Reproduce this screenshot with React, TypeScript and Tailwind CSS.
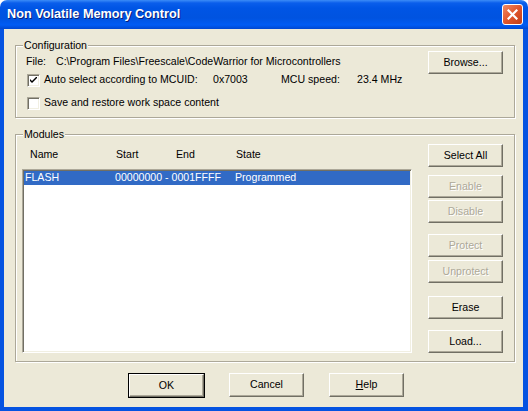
import React from 'react';

const btnBase =
  'h-[23px] w-[75px] flex items-center justify-center bg-[#ECE9D8] border-t border-l border-t-white border-l-white border-b border-r border-b-[#716F64] border-r-[#716F64] shadow-[inset_-1px_-1px_0_#ACA899]';

const Button: React.FC<{ label: React.ReactNode; disabled?: boolean; className?: string }> = ({
  label,
  disabled,
  className = '',
}) => (
  <div
    className={`${btnBase} ${className} ${
      disabled ? 'text-[#ACA899] [text-shadow:1px_1px_0_#fff]' : 'text-black'
    }`}
  >
    {label}
  </div>
);

const Checkbox: React.FC<{ checked?: boolean }> = ({ checked }) => (
  <div className="w-[13px] h-[13px] bg-white border border-t-[#ACA899] border-l-[#ACA899] border-b-white border-r-white shadow-[inset_1px_1px_0_#716F64,inset_-1px_-1px_0_#F1EFE2] flex items-center justify-center">
    {checked && (
      <svg width="7" height="7" viewBox="0 0 7 7">
        <path d="M0 2 L0 4 L2 6 L7 1 L7 -1 L2 4 Z" fill="#000" />
      </svg>
    )}
  </div>
);

const GroupLabel: React.FC<{ text: string }> = ({ text }) => (
  <span className="absolute left-[7px] -top-[8px] px-[1px] leading-[14px] bg-[#ECE9D8]">{text}</span>
);

export default function App() {
  return (
    <div className="w-[528px] h-[411px] flex flex-col font-['Liberation_Sans',Arial,sans-serif] text-[10.6px] text-black select-none">
      {/* title bar */}
      <div className="h-[29px] shrink-0 rounded-t-[7px] flex items-center pl-[7px] pr-[5px] bg-[linear-gradient(to_bottom,#3C8CF7_0px,#0A5EEB_3px,#0055E5_8px,#0053E0_18px,#005CF4_25px,#0047D0_29px)]">
        <span className="flex-1 text-white font-bold text-[12.7px] [text-shadow:1px_1px_0_#0A1E7A]">
          Non Volatile Memory Control
        </span>
        <div className="w-[21px] h-[21px] rounded-[3px] border border-white bg-[linear-gradient(to_bottom_right,#F08A63,#E0562C_50%,#C23E17)] flex items-center justify-center">
          <svg width="11" height="11" viewBox="0 0 11 11">
            <path d="M1.5 1.5 L9.5 9.5 M9.5 1.5 L1.5 9.5" stroke="#fff" strokeWidth="2.2" strokeLinecap="square" />
          </svg>
        </div>
      </div>

      {/* frame + body */}
      <div className="flex-1 flex flex-col bg-[#ECE9D8] border-l-[4px] border-r-[5px] border-b-[4px] border-[#0553E1]">
        {/* Configuration */}
        <div className="relative mt-[16px] ml-[11px] w-[500px] h-[73px] flex border border-[#ACA899] shadow-[inset_1px_1px_0_#fff,1px_1px_0_#fff]">
          <GroupLabel text="Configuration" />
          <div className="flex-1 flex flex-col pt-[8px] pl-[10px]">
            <div className="h-[16px] flex items-center">
              <span className="w-[30px]">File:</span>
              <span>C:\Program Files\Freescale\CodeWarrior for Microcontrollers</span>
            </div>
            <div className="h-[16px] mt-[2px] flex items-center">
              <div className="ml-[1px]">
                <Checkbox checked />
              </div>
              <span className="ml-[4px] w-[169px]">Auto select according to MCUID:</span>
              <span className="w-[68px]">0x7003</span>
              <span className="w-[76px]">MCU speed:</span>
              <span>23.4 MHz</span>
            </div>
            <div className="h-[16px] mt-[7px] flex items-center">
              <div className="ml-[1px]">
                <Checkbox />
              </div>
              <span className="ml-[4px]">Save and restore work space content</span>
            </div>
          </div>
          <div className="pt-[5px] mr-[11px]">
            <Button label="Browse..." />
          </div>
        </div>

        {/* Modules */}
        <div className="relative mt-[16px] ml-[11px] w-[500px] h-[228px] flex border border-[#ACA899] shadow-[inset_1px_1px_0_#fff,1px_1px_0_#fff]">
          <GroupLabel text="Modules" />
          <div className="flex-1 flex flex-col pt-[13px] pl-[6px]">
            <div className="h-[14px] flex items-center">
              <span className="ml-[8px] w-[86px]">Name</span>
              <span className="w-[60px]">Start</span>
              <span className="w-[60px]">End</span>
              <span>State</span>
            </div>
            <div className="mt-[7px] w-[390px] h-[184px] bg-white border border-t-[#ACA899] border-l-[#ACA899] border-b-white border-r-white shadow-[inset_1px_1px_0_#716F64,inset_-1px_-1px_0_#F1EFE2] p-[1px]">
              <div className="h-[14px] bg-[#316AC5] text-white flex items-center">
                <span className="ml-[1px] w-[90px]">FLASH</span>
                <span className="w-[120px]">00000000 - 0001FFFF</span>
                <span>Programmed</span>
              </div>
            </div>
          </div>
          <div className="flex flex-col pt-[9px] mr-[11px]">
            <Button label="Select All" />
            <Button label="Enable" disabled className="mt-[8px]" />
            <Button label="Disable" disabled className="mt-[2px]" />
            <Button label="Protect" disabled className="mt-[11px]" />
            <Button label="Unprotect" disabled className="mt-[3px]" />
            <Button label="Erase" className="mt-[13px]" />
            <Button label="Load..." className="mt-[11px]" />
          </div>
        </div>

        {/* dialog buttons */}
        <div className="mt-[11px] pl-[124px] flex">
          <div className="border border-black">
            <Button label="OK" className="w-[73px] h-[22px]" />
          </div>
          <Button label="Cancel" className="ml-[24px] h-[24px]" />
          <Button
            label={
              <span>
                <span className="underline">H</span>elp
              </span>
            }
            className="ml-[25px] h-[24px]"
          />
        </div>
      </div>
    </div>
  );
}
